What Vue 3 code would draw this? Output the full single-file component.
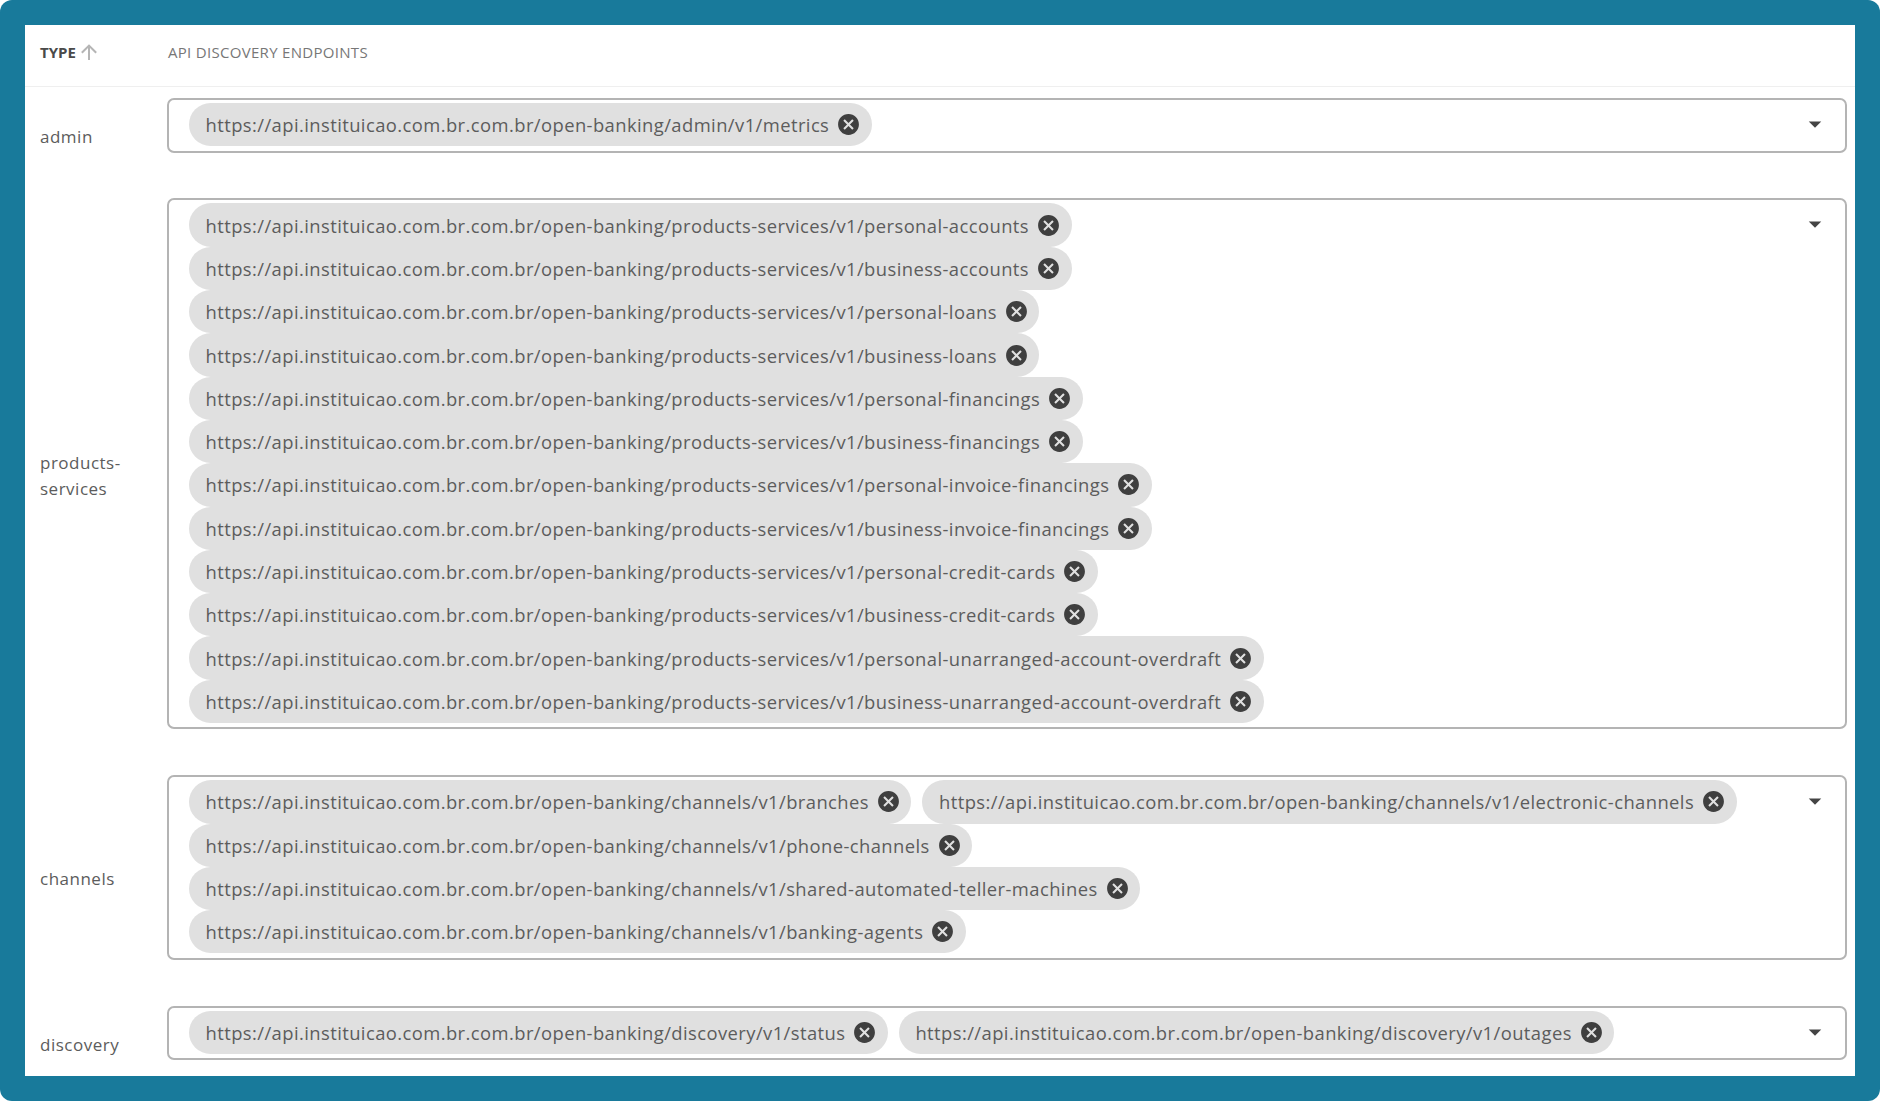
<script setup>
const base = 'https://api.instituicao.com.br.com.br/open-banking/'
const ps = 'products-services/v1/'
const rows = [
  { type: 'admin', urls: ['admin/v1/metrics'] },
  {
    type: 'products-services',
    urls: [
      'personal-accounts', 'business-accounts', 'personal-loans', 'business-loans',
      'personal-financings', 'business-financings', 'personal-invoice-financings',
      'business-invoice-financings', 'personal-credit-cards', 'business-credit-cards',
      'personal-unarranged-account-overdraft', 'business-unarranged-account-overdraft'
    ].map((s) => ps + s)
  },
  {
    type: 'channels',
    urls: [
      'channels/v1/branches', 'channels/v1/electronic-channels', 'channels/v1/phone-channels',
      'channels/v1/shared-automated-teller-machines', 'channels/v1/banking-agents'
    ]
  },
  { type: 'discovery', urls: ['discovery/v1/status', 'discovery/v1/outages'] }
]
</script>

<template>
  <div class="frame">
    <div class="panel">
      <div class="head">
        <div class="type-col head-type">
          <span>TYPE</span>
          <svg class="arrow" viewBox="0 0 24 24"><path d="M13,20H11V8L5.5,13.5L4.08,12.08L12,4.16L19.92,12.08L18.5,13.5L13,8V20Z" /></svg>
        </div>
        <div class="head-api">API DISCOVERY ENDPOINTS</div>
      </div>
      <div v-for="row in rows" :key="row.type" class="row">
        <div class="type-col type-cell">{{ row.type }}</div>
        <div class="cell">
          <div class="select">
            <div class="chips">
              <span v-for="u in row.urls" :key="u" class="chip">
                <span class="chip-text">{{ base + u }}</span>
                <svg class="close" viewBox="0 0 24 24"><path d="M12,2C17.53,2 22,6.47 22,12C22,17.53 17.53,22 12,22C6.47,22 2,17.53 2,12C2,6.47 6.47,2 12,2M15.59,7L12,10.59L8.41,7L7,8.41L10.59,12L7,15.59L8.41,17L12,13.41L15.59,17L17,15.59L13.41,12L17,8.41L15.59,7Z" /></svg>
              </span>
            </div>
            <svg class="caret" viewBox="0 0 24 24"><path d="M7,10L12,15L17,10H7Z" /></svg>
          </div>
        </div>
      </div>
    </div>
  </div>
</template>

<style>
html, body { margin: 0; background: #fff; }
</style>

<style scoped>
.frame {
  box-sizing: border-box;
  width: 1880px;
  height: 1101px;
  padding: 25px;
  background: #187a9b;
  border-radius: 12px;
  font-family: "Open Sans", "Noto Sans", sans-serif;
  color: #5c5c5c;
}
.panel {
  height: 100%;
  background: #fff;
  overflow: hidden;
}
.head {
  display: flex;
  align-items: center;
  box-sizing: border-box;
  height: 62px;
  padding-bottom: 7px;
  border-bottom: 1px solid #efefef;
  font-size: 15px;
}
.type-col {
  box-sizing: border-box;
  flex: 0 0 142px;
  padding-left: 15px;
}
.head-type {
  display: flex;
  align-items: center;
  font-weight: 700;
  color: #4a4a4a;
}
.arrow {
  width: 24px;
  height: 24px;
  margin-left: 1px;
  fill: #b5b5b5;
}
.head-api {
  margin-left: 1px;
  color: #777;
  letter-spacing: 0.3px;
}
.row {
  display: flex;
  align-items: center;
}
.type-cell {
  font-size: 17px;
  line-height: 26px;
  letter-spacing: 0.5px;
  width: 142px;
  padding-right: 30px;
}
.cell {
  flex: 1;
  padding: 11px 8px 34.8px 0;
}
.select {
  box-sizing: border-box;
  display: flex;
  align-items: flex-start;
  border: 2px solid #b4b4b4;
  border-radius: 7px;
  padding: 3px 15px 4.4px 20px;
}
.chips {
  flex: 1;
  display: flex;
  flex-wrap: wrap;
  column-gap: 11px;
}
.chip {
  display: inline-flex;
  align-items: center;
  box-sizing: border-box;
  height: 43.3px;
  padding: 0 10.5px 0 16.5px;
  border-radius: 22px;
  background: #e0e0e0;
  font-size: 18.4px;
  letter-spacing: 0.42px;
  white-space: nowrap;
}
.close {
  width: 25px;
  height: 25px;
  margin-left: 7px;
  fill: #3f3f3f;
}
.caret {
  flex: none;
  width: 30px;
  height: 30px;
  margin: 6px 0 0;
  fill: #444;
}
</style>
